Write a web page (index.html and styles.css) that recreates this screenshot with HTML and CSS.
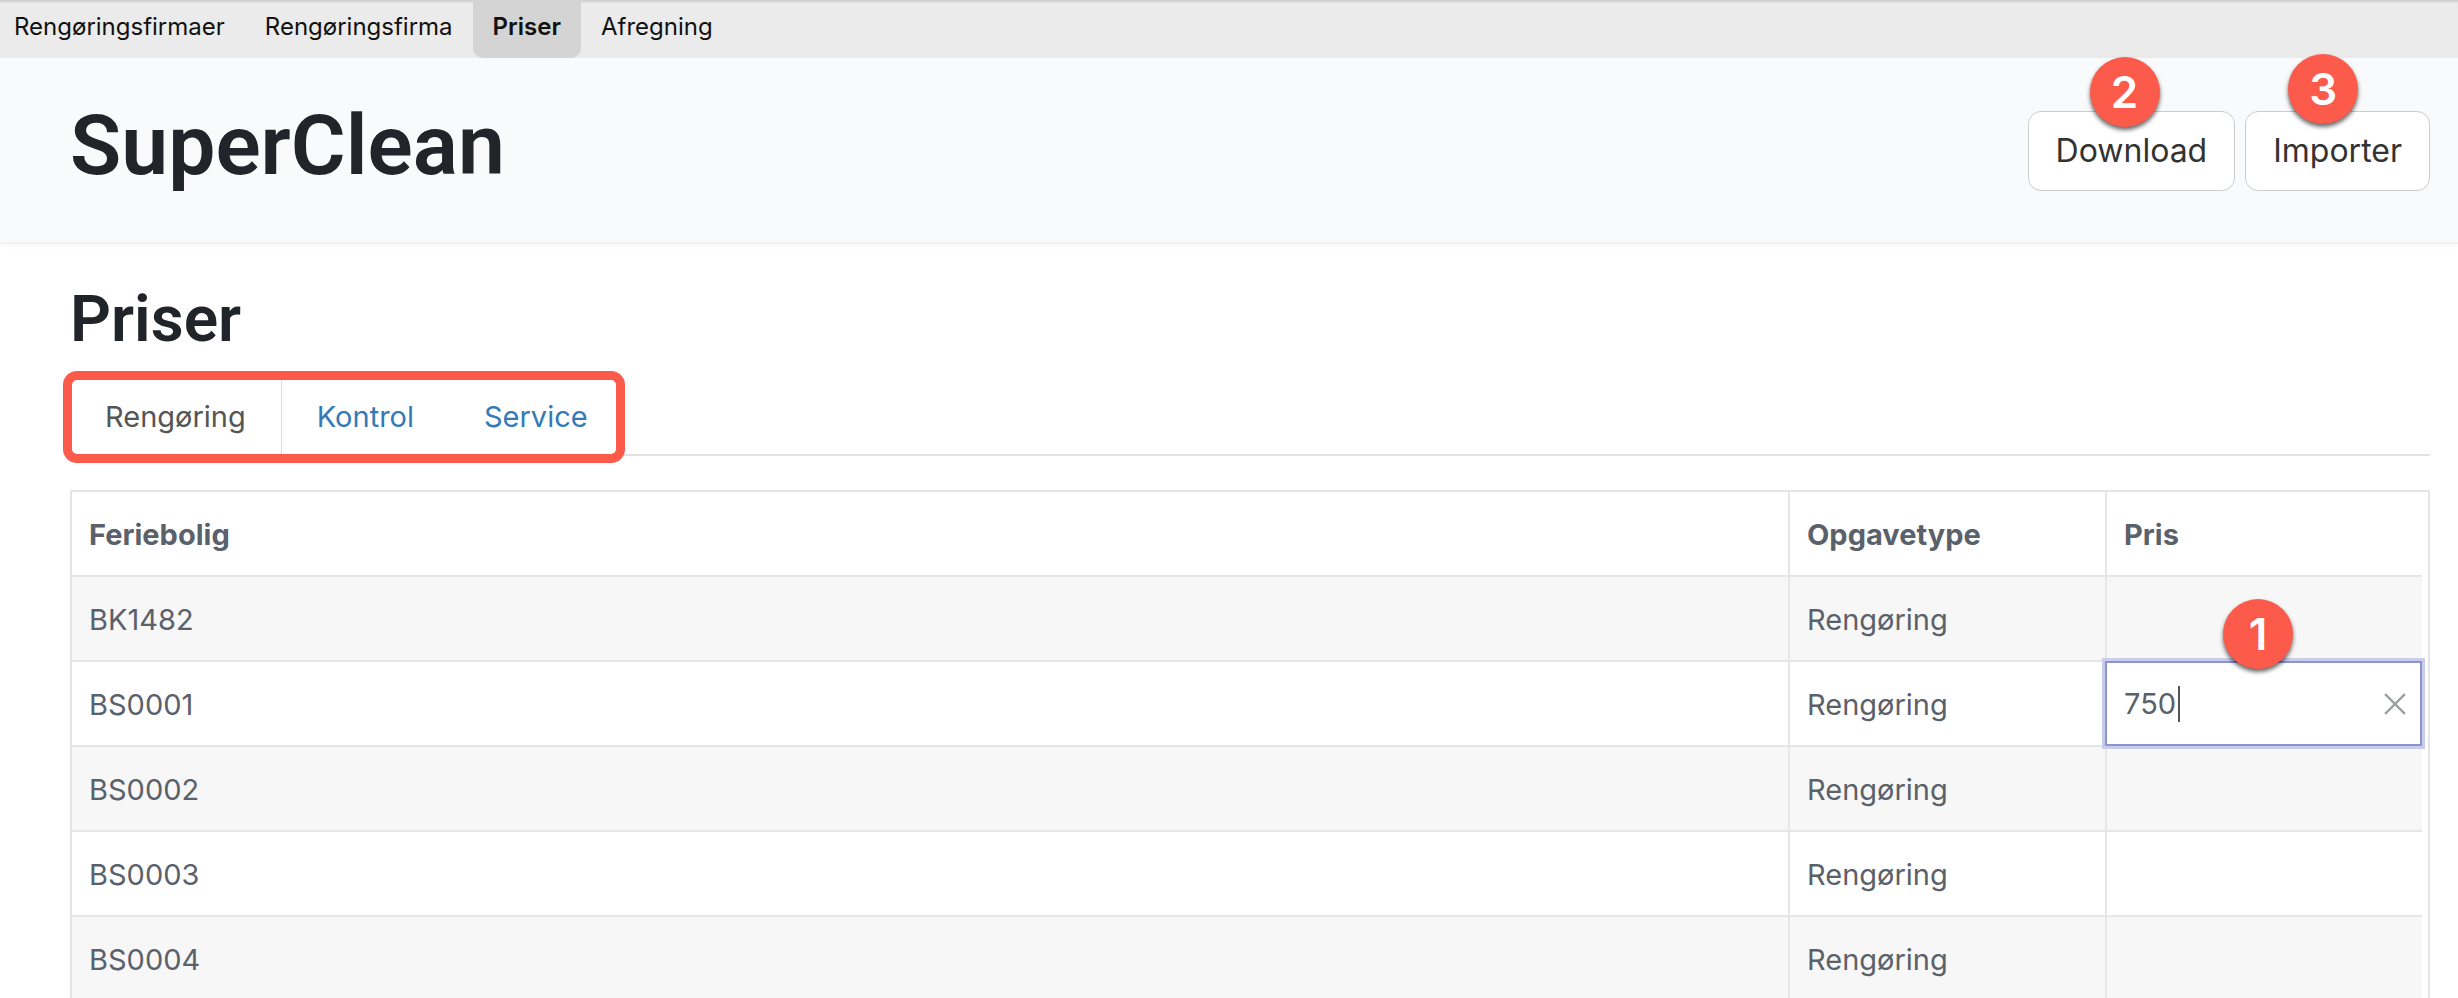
FILE: index.html
```
<!DOCTYPE html>
<html lang="da">
<head>
  <meta charset="UTF-8">
  <meta name="viewport" content="width=device-width, initial-scale=1">
  <title>SuperClean - Priser</title>
  <link rel="stylesheet" href="styles.css">
</head>
<body>

  <nav class="topnav">
    <a href="#">Rengøringsfirmaer</a>
    <a href="#">Rengøringsfirma</a>
    <a href="#" class="active">Priser</a>
    <a href="#">Afregning</a>
  </nav>

  <header class="page-header">
    <h1>SuperClean</h1>
    <div class="actions">
      <div class="action">
        <button type="button" class="btn">Download</button>
        <span class="badge badge-download">2</span>
      </div>
      <div class="action">
        <button type="button" class="btn">Importer</button>
        <span class="badge badge-import">3</span>
      </div>
    </div>
  </header>

  <main class="content">
    <h2>Priser</h2>

    <div class="tabs">
      <div class="tab-group">
        <a href="#" class="tab active">Rengøring</a>
        <a href="#" class="tab">Kontrol</a>
        <a href="#" class="tab">Service</a>
      </div>
    </div>

    <div class="grid">
      <table>
        <colgroup>
          <col>
          <col class="col-type">
          <col class="col-price">
        </colgroup>
        <thead>
          <tr><th>Feriebolig</th><th>Opgavetype</th><th id="pris">Pris</th></tr>
        </thead>
        <tbody>
          <tr><td>BK1482</td><td>Rengøring</td><td></td></tr>
          <tr>
            <td>BS0001</td>
            <td>Rengøring</td>
            <td class="editing">
              <div class="editor">
                <input type="text" value="750" aria-labelledby="pris">
                <span class="caret"></span>
                <button type="button" class="clear" aria-label="Ryd">
                  <svg width="22" height="22" viewBox="0 0 20 20">
                    <path d="M1 1L19 19M19 1L1 19" stroke="#9a9fa1" stroke-width="2" fill="none" />
                  </svg>
                </button>
                <span class="badge badge-price">1</span>
              </div>
            </td>
          </tr>
          <tr><td>BS0002</td><td>Rengøring</td><td></td></tr>
          <tr><td>BS0003</td><td>Rengøring</td><td></td></tr>
          <tr><td>BS0004</td><td>Rengøring</td><td></td></tr>
        </tbody>
      </table>
    </div>
  </main>

</body>
</html>
```
FILE: styles.css
```
* {
  box-sizing: border-box;
}
body {
  margin: 0;
  font-family: Inter, "Liberation Sans", sans-serif;
  font-size: 29px;
  color: #212529;
  background-color: #fff;
  overflow: hidden;
}
a {
  text-decoration: none;
}
.topnav {
  display: flex;
  height: 58px;
  background-color: #ebebeb;
  box-shadow: inset 0 3px 2px -1px #cfcfcf;
}
.topnav a {
  padding: 0 20px;
  font-size: 24px;
  line-height: 54px;
  color: #111;
}
.topnav a:first-child {
  padding-left: 14px;
}
.topnav a.active {
  font-weight: 600;
  background-color: #d4d4d4;
  border-radius: 0 0 10px 10px;
}
.page-header {
  display: flex;
  justify-content: space-between;
  align-items: flex-start;
  height: 186px;
  padding: 0 28px 0 70px;
  background-color: #f8fafc;
  border-bottom: 2px solid #f0f2f4;
  box-shadow: 0 2px 6px rgba(0,0,0,0.03);
}
h1, h2 {
  margin: 0;
  font-family: Roboto, Inter, sans-serif;
  font-weight: 600;
}
h1 {
  margin-top: 39px;
  font-size: 84px;
  line-height: 98px;
}
h2 {
  padding-top: 36px;
  font-size: 64px;
  line-height: 80px;
}
.actions {
  display: flex;
  gap: 10px;
  margin-top: 53px;
}
.action {
  position: relative;
}
.btn {
  height: 80px;
  padding: 0 27px 2px;
  font-family: inherit;
  font-size: 32px;
  color: #333;
  background-color: #fff;
  border: 1px solid #ccc;
  border-radius: 13px;
}
.badge {
  position: absolute;
  width: 70px;
  height: 70px;
  border-radius: 50%;
  background-color: #fc5a4b;
  color: #fff;
  font-size: 44px;
  font-weight: 600;
  line-height: 70px;
  text-align: center;
  box-shadow: 0 3px 4px rgba(0,0,0,0.6);
}
.badge-download {
  left: 62px;
  top: -54px;
}
.badge-import {
  left: 43px;
  top: -57px;
}
.badge-price {
  left: 116px;
  top: -64px;
}
.content {
  padding: 0 28px 0 70px;
}
.tabs {
  display: flex;
  height: 96px;
  padding-top: 19px;
  border-bottom: 2px solid #e2e2e2;
}
.tab-group {
  position: relative;
  display: flex;
}
.tab-group::after {
  content: "";
  position: absolute;
  inset: -8px -2px -9px -7px;
  border: 9px solid #fc5a4b;
  border-radius: 14px;
}
.tab {
  padding: 0 35px;
  line-height: 76px;
  color: #337ab7;
}
.tab.active {
  color: #555;
  border-right: 1px solid #ddd;
}
.grid {
  margin-top: 34px;
  padding-right: 6px;
  border: 1px solid #e4e4e4;
  border-width: 2px 2px 0 2px;
}
table {
  width: 100%;
  border-collapse: separate;
  border-spacing: 0;
  table-layout: fixed;
  color: #5b616b;
}
.col-type, .col-price {
  width: 317px;
}
th, td {
  height: 85px;
  padding: 2px 17px 0;
  text-align: left;
  border-bottom: 2px solid #e6e6e6;
}
th {
  font-weight: 700;
}
th + th, td + td {
  border-left: 2px solid #e6e6e6;
}
tbody tr:nth-child(odd) {
  background-color: #f7f7f7;
}
td.editing {
  padding: 0;
}
.editor {
  position: relative;
  display: flex;
  align-items: center;
  height: 85px;
  margin: -2px 0 -2px -2px;
  padding: 0 14px 0 17px;
  background-color: #fff;
  border: 2px solid #8c93cf;
  box-shadow: 0 0 0 3px #c9cdec;
}
.editor input {
  width: 54px;
  padding: 0;
  border: 0;
  outline: 0;
  font: inherit;
  color: inherit;
}
.caret {
  width: 2px;
  height: 36px;
  background-color: #555;
}
.clear {
  display: flex;
  margin-left: auto;
  padding: 0;
  border: 0;
  background: none;
  cursor: pointer;
}
```
